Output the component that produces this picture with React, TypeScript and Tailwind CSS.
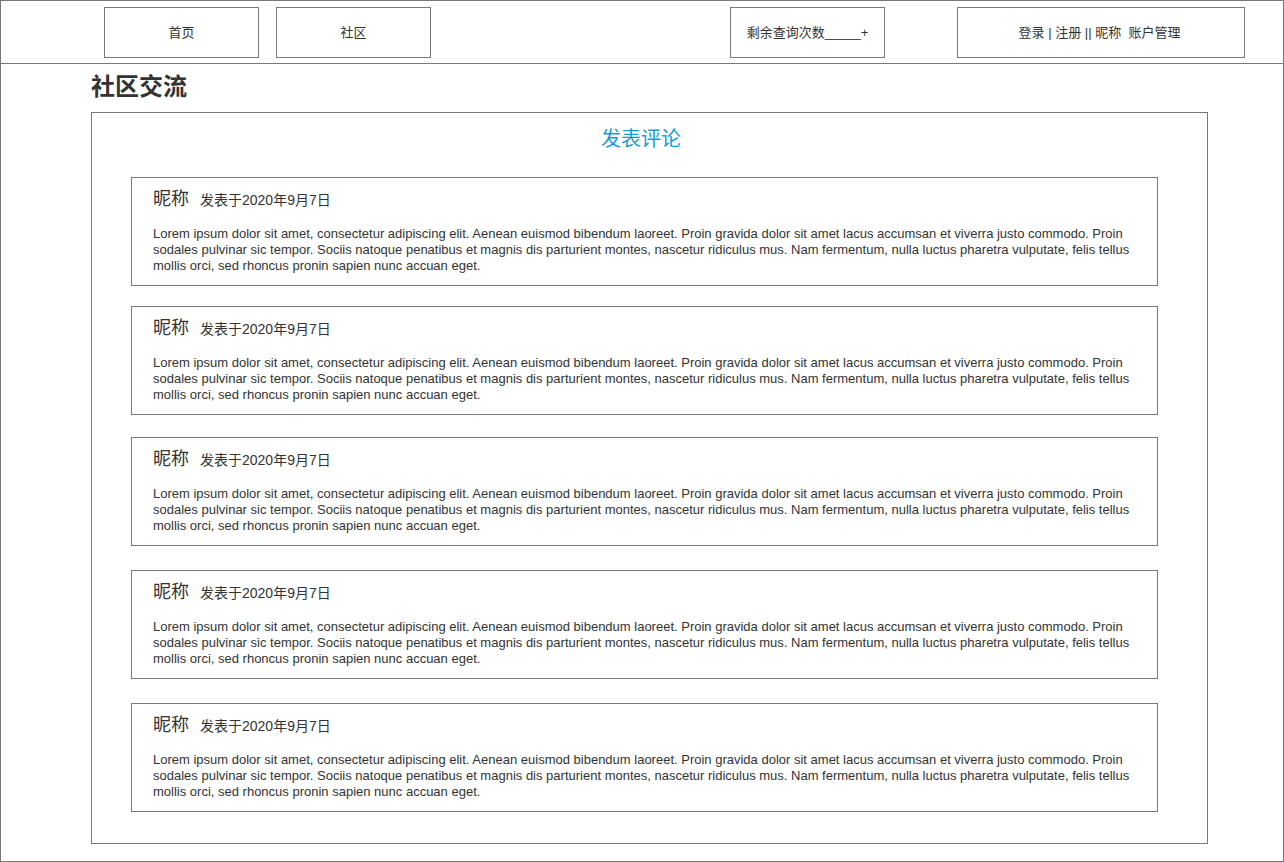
import React from 'react';

const LOREM =
  'Lorem ipsum dolor sit amet, consectetur adipiscing elit. Aenean euismod bibendum laoreet. Proin gravida dolor sit amet lacus accumsan et viverra justo commodo. Proin sodales pulvinar sic tempor. Sociis natoque penatibus et magnis dis parturient montes, nascetur ridiculus mus. Nam fermentum, nulla luctus pharetra vulputate, felis tellus mollis orci, sed rhoncus pronin sapien nunc accuan eget.';

const comments = [
  { id: 1, gap: 'mt-[24px]' },
  { id: 2, gap: 'mt-[20px]' },
  { id: 3, gap: 'mt-[22px]' },
  { id: 4, gap: 'mt-[24px]' },
  { id: 5, gap: 'mt-[24px]' },
];

const NavBox: React.FC<{ className: string; children: React.ReactNode }> = ({ className, children }) => (
  <div
    className={`h-[51px] flex items-center justify-center border border-[#797979] text-[13px] text-[#333333] whitespace-pre ${className}`}
  >
    {children}
  </div>
);

const App: React.FC = () => {
  return (
    <div
      className="w-[1284px] h-[862px] border border-[#797979] bg-white text-[#333333] overflow-hidden"
      style={{ fontFamily: '"Liberation Sans", Arial, "Noto Sans CJK SC", sans-serif' }}
    >
      {/* header */}
      <div className="h-[63px] border-b border-[#797979] flex items-start pt-[6px]">
        <NavBox className="ml-[103px] w-[155px]">首页</NavBox>
        <NavBox className="ml-[17px] w-[155px]">社区</NavBox>
        <NavBox className="ml-[299px] w-[155px]">剩余查询次数_____+</NavBox>
        <NavBox className="ml-[72px] w-[288px] pr-[3px]">登录 | 注册 || 昵称  账户管理</NavBox>
      </div>

      <div className="pl-[90px]">
        <h1 className="mt-[7px] text-[24px] leading-[32px] font-bold text-[#333333]">社区交流</h1>

        <div className="mt-[9px] w-[1117px] h-[732px] border border-[#797979] px-[39px]">
          <div className="pt-[12px] pr-[17px] text-center text-[20px] leading-[28px] text-[#169bd5]">发表评论</div>

          {comments.map((c) => (
            <div key={c.id} className={`${c.gap} w-[1027px] border border-[#797979] pl-[21px] pr-[20px] pt-[9px] pb-[11px]`}>
              <div className="flex items-baseline h-[24px]">
                <span className="text-[18px] leading-[24px]">昵称</span>
                <span className="ml-[11px] text-[14px] leading-[24px]">发表于2020年9月7日</span>
              </div>
              <p className="mt-[15px] text-[13px] leading-[16px]">{LOREM}</p>
            </div>
          ))}
        </div>
      </div>
    </div>
  );
};

export default App;
